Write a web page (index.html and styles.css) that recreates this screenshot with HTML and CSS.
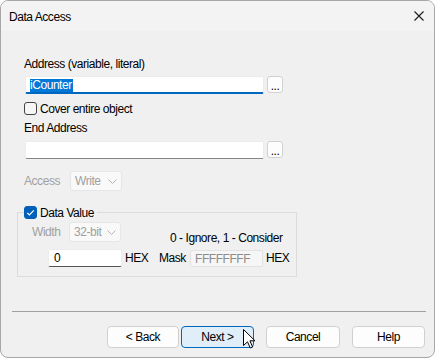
FILE: index.html
```html
<!DOCTYPE html>
<html lang="en">
<head>
<meta charset="utf-8">
<title>Data Access</title>
<link rel="stylesheet" href="styles.css">
</head>
<body>
<div class="window">
  <div class="titlebar">
    <span class="title">Data Access</span>
    <svg class="close" width="10" height="10" viewBox="0 0 10 10"><path d="M0.5 0.5 L9.5 9.5 M9.5 0.5 L0.5 9.5" stroke="#1a1a1a" stroke-width="1.1" fill="none"/></svg>
  </div>
  <div class="content">
    <div class="label lbl-address">Address (variable, literal)</div>
    <div class="field-row row-address">
      <div class="textbox focused"><span class="sel">iCounter</span></div>
      <div class="browse">...</div>
    </div>
    <div class="check row-cover"><span class="box"></span><span>Cover entire object</span></div>
    <div class="label lbl-end">End Address</div>
    <div class="field-row row-end">
      <div class="textbox"></div>
      <div class="browse">...</div>
    </div>
    <div class="access-row">
      <span class="dim access-label">Access</span>
      <div class="combo"><span>Write</span><svg class="chev" width="9" height="5" viewBox="0 0 9 5"><path d="M0.5 0.5 L4.5 4.5 L8.5 0.5" stroke="#b4b4b4" stroke-width="1" fill="none"/></svg></div>
    </div>
    <fieldset class="group">
      <legend class="check"><span class="box checked"><svg width="13" height="13" viewBox="0 0 13 13"><path d="M3.2 6.8 L5.4 9 L9.8 4.3" stroke="#fff" stroke-width="1.2" fill="none"/></svg></span><span>Data Value</span></legend>
      <div class="width-row">
        <span class="dim width-label">Width</span>
        <div class="combo"><span>32-bit</span><svg class="chev" width="9" height="5" viewBox="0 0 9 5"><path d="M0.5 0.5 L4.5 4.5 L8.5 0.5" stroke="#b4b4b4" stroke-width="1" fill="none"/></svg></div>
        <span class="hint">0 - Ignore, 1 - Consider</span>
      </div>
      <div class="value-row">
        <div class="textbox value">0</div>
        <span class="hex1">HEX</span>
        <span class="mask-label">Mask</span>
        <div class="textbox mask">FFFFFFFF</div>
        <span class="hex2">HEX</span>
      </div>
    </fieldset>
    <div class="separator"></div>
    <div class="buttons">
      <div class="btn back">&lt; Back</div>
      <div class="btn next">Next &gt;</div>
      <div class="btn cancel">Cancel</div>
      <div class="btn help">Help</div>
    </div>
  </div>
  <svg class="cursor" width="13" height="20" viewBox="0 0 13 20"><path d="M0.5 0.5 L0.5 16.5 L4.5 12.8 L7.3 19 L9.6 18 L6.9 11.8 L12 11.8 Z" fill="#fff" stroke="#000" stroke-width="1" stroke-linejoin="miter"/></svg>
</div>
</body>
</html>
```
FILE: styles.css
```css
* { box-sizing: border-box; }
html, body { margin: 0; padding: 0; background: #ffffff; }
body {
  font-family: "Segoe UI", "Liberation Sans", Arial, sans-serif;
  font-size: 12px;
  letter-spacing: -0.45px;
  color: #000;
}
.window {
  position: relative;
  width: 435px;
  height: 358px;
  border: 1px solid #a7a7a7;
  border-radius: 8px;
  background: #f0f0f0;
  overflow: hidden;
}
.titlebar {
  height: 30px;
  background: #f3f3f3;
  display: flex;
  align-items: center;
  justify-content: space-between;
  padding: 0 10px 0 8px;
}
.title { line-height: 16px; padding-top: 1px; }
.close { display: block; }
.content { display: flex; flex-direction: column; align-items: flex-start; }
.label { height: 16px; line-height: 16px; margin-left: 23px; }
.lbl-address { margin-top: 25px; }
.lbl-end { margin-top: 3px; }
.field-row { display: flex; align-items: flex-start; margin-left: 24px; gap: 3px; height: 18px; }
.row-address { margin-top: 4px; }
.row-end { margin-top: 5px; }
.textbox {
  width: 239px;
  height: 18px;
  background: #fff;
  border: 1px solid #ececec;
  border-bottom: 1px solid #868686;
  border-radius: 2px;
  line-height: 16px;
  padding-left: 4px;
}
.textbox.focused { border-bottom: 2px solid #0067c0; padding-top: 2px; line-height: 13px; }
.sel { background: #0078d7; color: #fff; display: inline-block; height: 13px; line-height: 13px; padding-right: 1px; }
.browse {
  width: 16px;
  height: 17px;
  background: #fdfdfd;
  border: 1px solid #d0d0d0;
  border-radius: 3px;
  text-align: center;
  line-height: 18px;
  letter-spacing: -0.5px;
}
.check { display: flex; align-items: center; gap: 3px; height: 17px; }
.row-cover { margin-top: 6px; margin-left: 23px; }
.box {
  width: 13px; height: 13px;
  border: 1px solid #444;
  border-radius: 3px;
  background: #f6f6f6;
  display: block;
}
.box.checked { background: #005fb8; border-color: #005fb8; position: relative; }
.box.checked svg { position: absolute; left: -1px; top: -1px; }
.dim { color: #a0a0a0; }
.access-row { display: flex; align-items: center; height: 21px; margin-top: 11px; margin-left: 23px; }
.access-label { width: 46px; }
.combo {
  width: 52px; height: 20px;
  background: #f9f9f9;
  border: 1px solid #e6e6e6;
  border-radius: 3px;
  color: #a0a0a0;
  display: flex; align-items: center; justify-content: space-between;
  padding: 0 4px 0 4px;
}
.chev { display: block; margin-top: 1px; }
.group {
  margin: 13px 0 0 16px;
  width: 280px;
  border: 1px solid #dcdcdc;
  padding: 0 0 9px 6px;
  min-width: 0;
}
.group legend { padding: 0 3px 0 0; height: 17px; }
.width-row { display: flex; align-items: center; height: 20px; margin-top: 1px; margin-left: 8px; }
.width-label { width: 37px; }
.hint { margin-left: 49px; margin-top: 12px; }
.value-row { display: flex; align-items: center; height: 18px; margin-top: 7px; margin-left: 24px; }
.textbox.value { width: 74px; border-bottom-color: #555; padding-left: 5px; }
.hex1 { margin-left: 3px; width: 34px; }
.mask-label { width: 31px; }
.textbox.mask { width: 73px; background: #f6f6f6; border: 1px solid #e2e2e2; color: #8c8c8c; height: 17px; }
.hex2 { margin-left: 3px; }
.separator { margin: 34px 0 0 11px; width: 414px; height: 1px; background: #a0a0a0; }
.buttons { display: flex; align-self: stretch; justify-content: flex-end; margin-top: 14px; padding-right: 9px; }
.btn {
  width: 73px; height: 22px;
  background: #fdfdfd;
  border: 1px solid #d0d0d0;
  border-radius: 4px;
  text-align: center;
  line-height: 20px;
}
.back { width: 72px; }
.next { margin-left: 2px; background: #e0eef9; border-color: #0067c0; }
.cancel { margin-left: 12px; width: 74px; }
.help { margin-left: 12px; }
.cursor { position: absolute; left: 242px; top: 328px; }
```
